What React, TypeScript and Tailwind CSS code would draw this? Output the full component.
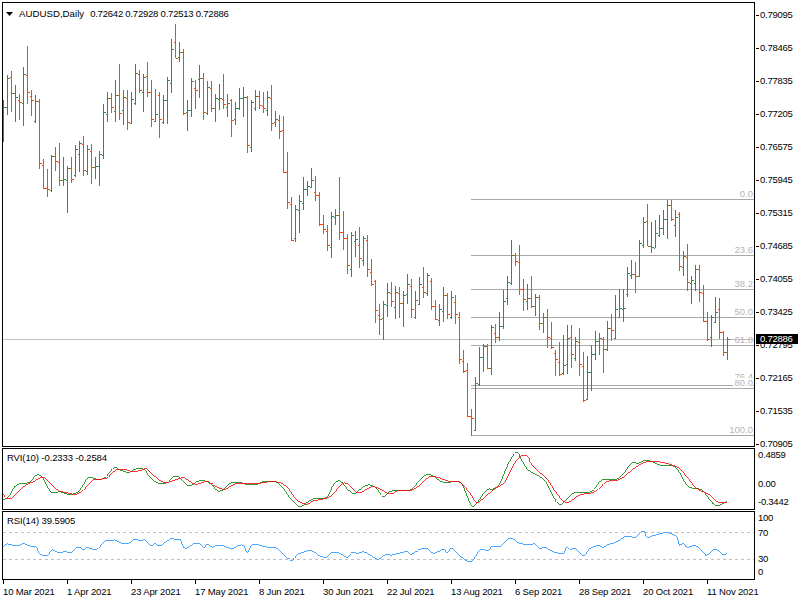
const GREEN = "#2e8b57";
const ORANGE = "#ff4500";

// top, bottom, open tick, close tick, 1 = up bar
type Bar = [number, number, number, number, number];

const bars: Bar[] = [
  [100,142,107,107,1],[75,115,107,78,1],[71,112,77,93,0],[85,122,93,97,1],[94,120,100,102,0],[67,126,103,74,1],
  [46,104,75,92,0],[90,116,96,100,0],[95,123,121,101,1],[99,169,101,163,0],[159,189,165,188,0],[169,197,188,189,0],
  [155,192,190,156,1],[147,171,156,161,0],[143,186,162,180,0],[157,186,180,179,1],[166,213,180,168,1],[157,183,168,179,0],
  [145,177,175,149,1],[141,172,154,143,1],[136,176,144,170,0],[145,175,171,149,1],[144,184,151,167,0],[157,179,167,166,1],
  [151,186,166,154,1],[104,159,155,112,1],[92,122,114,98,1],[93,113,98,107,0],[80,122,111,95,1],[64,120,95,113,0],
  [90,125,110,97,1],[90,130,98,122,0],[92,124,123,99,1],[64,105,103,73,1],[70,93,74,90,0],[74,112,92,77,1],
  [62,97,76,92,0],[80,127,92,119,0],[89,122,121,114,1],[92,138,95,119,0],[95,124,122,100,1],[77,124,100,80,1],
  [39,93,83,49,1],[24,58,42,58,0],[42,62,57,52,1],[49,115,52,113,0],[100,131,112,110,1],[78,117,110,81,1],
  [80,109,88,90,0],[65,98,79,78,1],[73,120,78,112,0],[81,115,113,87,1],[81,112,88,108,0],[94,122,108,98,1],
  [84,110,99,98,1],[74,109,99,104,0],[94,117,107,103,1],[99,137,100,120,0],[102,125,119,108,1],[88,110,108,98,1],
  [87,117,98,97,1],[96,153,97,145,0],[100,152,147,102,1],[90,111,108,96,1],[91,109,96,105,0],[92,113,106,108,0],
  [91,116,110,97,1],[85,131,98,123,0],[111,127,122,119,1],[115,139,120,131,0],[116,173,130,172,0],[152,209,172,202,0],
  [197,241,204,240,0],[205,242,238,209,1],[195,233,210,201,1],[177,210,203,189,1],[181,196,189,186,1],[168,188,187,180,1],
  [176,201,192,195,0],[192,226,195,224,0],[215,234,224,229,0],[225,251,231,245,0],[212,258,247,216,1],[209,225,217,215,1],
  [177,240,215,232,0],[211,250,232,238,0],[234,274,238,265,0],[232,277,269,235,1],[231,257,241,239,1],[227,268,245,258,0],
  [236,266,260,238,1],[235,277,240,269,0],[259,286,272,284,0],[280,323,281,310,0],[304,335,315,319,0],[301,340,318,304,1],
  [283,317,305,292,1],[282,307,293,301,0],[286,319,307,292,1],[287,318,293,303,0],[291,327,303,295,1],[274,304,294,284,1],
  [279,318,286,309,0],[291,319,317,300,1],[277,305,304,284,1],[267,298,287,292,0],[273,296,293,275,1],[278,310,281,306,0],
  [300,320,306,319,0],[304,326,320,309,1],[287,322,311,295,1],[293,319,295,314,0],[291,319,317,297,1],[295,324,302,314,0],
  [312,364,317,359,0],[350,373,361,371,0],[363,417,370,416,0],[409,436,416,418,0],[377,431,430,383,1],[347,386,384,357,1],
  [344,372,357,346,1],[344,369,346,368,0],[325,375,368,327,1],[324,343,333,337,0],[312,341,337,326,1],[290,329,326,301,1],
  [276,305,298,282,1],[240,285,283,255,1],[253,266,255,261,0],[245,295,262,289,0],[279,311,289,299,0],[284,310,301,298,1],
  [276,308,298,306,0],[294,316,306,297,1],[295,330,297,323,0],[313,333,323,317,1],[309,348,317,337,0],[322,349,338,347,0],
  [350,376,353,359,0],[342,376,362,374,0],[335,375,373,365,1],[325,374,364,338,1],[325,368,337,354,0],[337,361,358,341,1],
  [328,376,342,364,0],[352,402,366,400,0],[356,400,399,372,1],[345,391,372,354,1],[331,360,354,341,1],[333,355,341,338,1],
  [337,373,339,349,0],[321,351,349,328,1],[314,341,328,330,0],[295,339,338,309,1],[289,318,317,308,1],[289,322,309,308,1],
  [267,297,294,273,1],[260,279,275,274,1],[262,293,274,276,0],[240,277,276,243,1],[217,248,245,222,1],[204,246,221,246,0],
  [222,253,246,247,1],[220,248,248,233,1],[215,237,235,228,1],[210,235,228,219,1],[200,239,219,205,1],[200,221,205,219,0],
  [210,237,225,217,1],[212,271,214,266,0],[251,276,267,256,1],[244,291,257,282,0],[276,304,283,280,1],[265,291,283,269,1],
  [265,302,269,292,0],[285,322,293,321,0],[312,341,321,339,0],[315,347,337,317,1],[297,323,322,312,1],[298,339,309,332,0],
  [331,356,332,352,0],[337,360,352,339,1],
];

const yTicks = ["0.79095","0.78465","0.77835","0.77205","0.76575","0.75945","0.75315","0.74685","0.74055","0.73425","0.72795","0.72165","0.71535","0.70905"];
const dates = ["10 Mar 2021","1 Apr 2021","23 Apr 2021","17 May 2021","8 Jun 2021","30 Jun 2021","22 Jul 2021","13 Aug 2021","6 Sep 2021","28 Sep 2021","20 Oct 2021","11 Nov 2021"];

const fibs = [
  { y: 199, label: "0.0" },
  { y: 255, label: "23.6" },
  { y: 289, label: "38.2" },
  { y: 317, label: "50.0" },
  { y: 345, label: "61.8" },
  { y: 385, label: "76.4" },
  { y: 388, label: "80.0" },
  { y: 435, label: "100.0" },
];

// points are read off in 3x crop units: [x, y] from a crop origin
const crop = (ox: number, pts: number[]) => {
  const out: [number, number][] = [];
  for (let i = 0; i < pts.length; i += 2) out.push([ox + pts[i] / 3, 440 + pts[i + 1] / 3]);
  return out;
};

// catmull-rom through the points, keeps the indicator lines round
const smooth = (p: [number, number][]) => {
  let d = `M${p[0][0]} ${p[0][1]}`;
  for (let i = 0; i < p.length - 1; i++) {
    const a = p[Math.max(i - 1, 0)], b = p[i], c = p[i + 1], e = p[Math.min(i + 2, p.length - 1)];
    d += ` C${b[0] + (c[0] - a[0]) / 6} ${b[1] + (c[1] - a[1]) / 6} ${c[0] - (e[0] - b[0]) / 6} ${c[1] - (e[1] - b[1]) / 6} ${c[0]} ${c[1]}`;
  }
  return d;
};

const rviGreen = [
  ...crop(0, [9,180,20,175,30,165,40,145,55,133,75,130,92,125,105,108,118,105,130,115,145,145,155,157,170,157,180,155,200,162,220,162,235,155,250,135,262,115,275,113,295,118,315,113,330,95,345,82,360,90,385,97,400,90,420,85,435,90,445,105,460,122,480,130,500,128,520,110,535,110,550,125,570,138,590,125,610,122,630,130,655,153,675,145,690,130,715,127,740,133,770,133,790,125]),
  ...crop(270, [0,125,20,127,40,145,65,180,90,200,110,188,130,177,170,172,190,135,210,123,235,150,255,160,280,140,300,135,320,145,340,170,365,153,420,150,445,125,470,103,490,108,520,127,570,127,590,165,605,197,620,190,650,150,670,147,690,130,715,70,740,37,755,60,775,90,810,110]),
  ...crop(530, [50,130,70,170,90,193,110,178,135,158,185,155,215,120,265,115,305,70,325,70,350,60,390,75,430,78,450,100,475,140,515,150,555,195,590,185]),
];

const rviRed = [
  ...crop(0, [9,162,20,175,35,175,55,155,75,137,100,125,125,112,140,118,155,135,175,152,200,158,225,163,245,155,265,135,280,120,320,115,335,100,355,88,380,90,400,95,425,90,440,87,460,105,490,127,520,122,550,113,570,125,590,133,620,124,640,135,670,148,690,140,715,130,760,132,790,128]),
  ...crop(270, [0,125,30,128,55,145,80,180,110,193,130,183,180,170,210,137,230,130,265,158,310,140,360,162,385,152,425,150,450,135,480,110,510,115,540,125,570,127,600,160,620,188,640,175,670,150,705,125,730,75,755,47,775,50]),
  ...crop(530, [0,65,20,90,50,115,80,160,110,187,150,165,195,155,230,125,270,118,320,80,365,63,440,80,470,110,500,145,540,165,565,187,590,187]),
];

const rsi = [
  ...crop(0, [9,320,22,312,35,315,55,318,70,311,90,318,108,320,118,340,135,347,145,345,155,330,165,333,180,339,195,335,215,337,228,323,240,323,250,330,262,323,280,328,295,325,315,302,330,303,345,300,365,310,385,310,405,298,420,303,435,300,455,318,465,310,478,318,495,308,515,295,530,300,540,298,552,323,565,322,580,312,600,312,612,322,622,313,635,322,650,316,670,317,695,327,712,318,730,316,742,338,755,316,770,313,790,319]),
  ...crop(270, [0,323,22,325,45,347,65,362,80,345,105,335,125,332,150,348,170,352,185,338,205,338,232,352,245,338,265,340,280,335,300,345,325,358,345,345,365,345,385,340,410,335,425,343,445,330,470,325,490,340,520,328,532,338,545,325,570,348,603,365,630,330,655,332,665,320,690,320,710,300,725,295,750,310]),
  ...crop(530, [0,314,15,312,30,325,45,322,70,335,100,340,110,322,122,330,135,325,160,347,180,325,205,317,220,322,235,313,250,310,265,303,290,288,315,292,340,273,352,293,370,287,410,278,440,290,448,315,460,310,472,322,497,317,525,343,530,347,550,330,565,332,580,345,590,340]),
];

const PriceChart = () => (
  <svg viewBox="3 3 751 443" className="block w-[751px] h-[443px]">
    {fibs.map((f) => (
      <rect key={f.y} x={471} y={f.y} width={283} height={1} fill="#a9a9a9" />
    ))}
    <rect x={3} y={339} width={751} height={1} fill="#c0c0c0" />
    {bars.map((b, i) => {
      const x = 3 + i * 4;
      const color = b[4] ? GREEN : ORANGE;
      return (
        <g key={i} fill={color}>
          <rect x={x} y={b[0]} width={1} height={b[1] - b[0]} />
          <rect x={x - 1} y={b[2]} width={1} height={1} />
          <rect x={x + 1} y={b[3]} width={2} height={1} />
        </g>
      );
    })}
    {fibs.map((f) => (
      <g key={f.label}>
        {f.label === "80.0" && <rect x={733} y={378} width={20} height={8} fill="#fff" />}
        <text x={753} y={f.label === "76.4" ? f.y - 5 : f.y - 2} textAnchor="end" fill="#b4b4b4">
          {f.label}
        </text>
      </g>
    ))}
  </svg>
);

const RviChart = () => (
  <svg viewBox="3 449 751 60" className="block w-[751px] h-[60px]">
    <path d={smooth(rviGreen)} fill="none" stroke="#008000" strokeWidth={0.8} shapeRendering="crispEdges" />
    <path d={smooth(rviRed)} fill="none" stroke="#ff0000" strokeWidth={0.8} shapeRendering="crispEdges" />
  </svg>
);

const RsiChart = () => (
  <svg viewBox="3 512 751 67" className="block w-[751px] h-[67px]">
    <line x1={3} x2={754} y1={532.5} y2={532.5} stroke="#c0c0c0" strokeDasharray="3 3" shapeRendering="crispEdges" />
    <line x1={3} x2={754} y1={559.5} y2={559.5} stroke="#c0c0c0" strokeDasharray="3 3" shapeRendering="crispEdges" />
    <path d={smooth(rsi)} fill="none" stroke="#1e90ff" strokeWidth={0.8} shapeRendering="crispEdges" />
  </svg>
);

export default function App() {
  return (
    <div className="relative w-[800px] h-[600px] overflow-hidden bg-white pl-[2px] pt-[2px] text-black font-['Liberation_Sans',Arial,sans-serif] text-[9.5px]">
      {/* main price window */}
      <div className="flex h-[445px]">
        <div className="relative w-[753px] border border-black">
          <PriceChart />
          <div className="absolute left-[3px] top-[5px] flex items-center gap-[6px] leading-3 whitespace-nowrap">
            <svg width="7" height="4" viewBox="0 0 7 4" className="block">
              <path d="M0 0h7L3.5 4z" fill="#000" />
            </svg>
            <span className="text-[9.7px]">AUDUSD,Daily</span>
            <span className="tracking-[-0.22px]">0.72642 0.72928 0.72513 0.72886</span>
          </div>
        </div>
        <div className="relative w-[45px] tracking-[-0.25px]">
          <div className="flex flex-col pt-[7px]">
            {yTicks.map((t) => (
              <div key={t} className="h-[33px] shrink-0 flex items-start leading-3">
                <div className="w-[3px] h-px mt-[6px] ml-px bg-black" />
                <span className="ml-[1px] whitespace-nowrap">{t}</span>
              </div>
            ))}
          </div>
          <div className="absolute left-px top-[332px] w-[42px] h-[10px] bg-black text-white leading-[10px] pl-[4px]">0.72886</div>
        </div>
      </div>

      {/* RVI window */}
      <div className="flex h-[62px] mt-px">
        <div className="relative w-[753px] border border-black">
          <RviChart />
          <div className="absolute left-[4px] top-[3px] leading-3 whitespace-nowrap tracking-[-0.1px]">RVI(10) -0.2333 -0.2584</div>
        </div>
        <div className="flex flex-col pt-[1px] pl-[3px] leading-3 tracking-[-0.25px]">
          <span className="mb-[17px] h-3">0.4859</span>
          <span className="mb-[6px] h-3">0.00</span>
          <span className="h-3">-0.3442</span>
        </div>
      </div>

      {/* RSI window */}
      <div className="flex h-[69px] mt-px">
        <div className="relative w-[753px] border border-black">
          <RsiChart />
          <div className="absolute left-[4px] top-[3px] leading-3 whitespace-nowrap tracking-[-0.1px]">RSI(14) 39.5905</div>
        </div>
        <div className="flex flex-col pt-[1px] pl-[3px] leading-3 tracking-[-0.25px]">
          <span className="mb-[3px] h-3">100</span>
          <span className="mb-[14px] h-3">70</span>
          <span className="mb-px h-3">30</span>
          <span className="h-3">0</span>
        </div>
      </div>

      {/* date axis */}
      <div className="flex ml-px tracking-[-0.15px]">
        {dates.map((d) => (
          <div key={d} className="w-[64px] shrink-0">
            <div className="w-px h-[4px] bg-black" />
            <div className="whitespace-nowrap leading-3 mt-[2px]">{d}</div>
          </div>
        ))}
      </div>
    </div>
  );
}
